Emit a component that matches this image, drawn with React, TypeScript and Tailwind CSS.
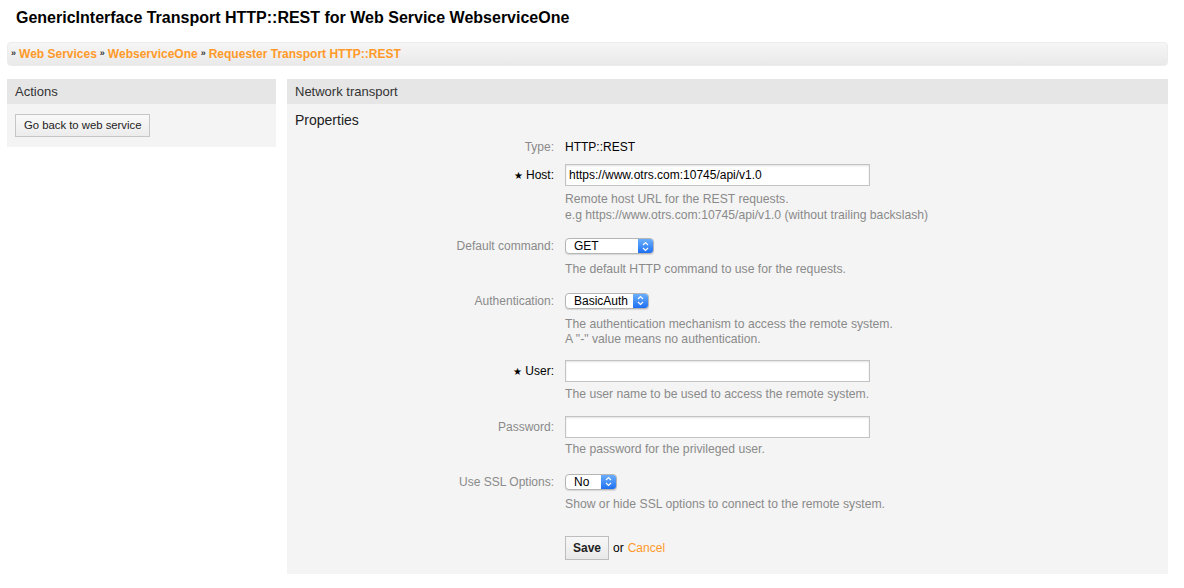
import type { ReactNode } from 'react'

const font = { fontFamily: '"Liberation Sans", Arial, Helvetica, sans-serif' }

function Select({ value, width }: { value: string; width: string }) {
  return (
    <div
      className={`flex h-[16px] items-stretch overflow-hidden rounded-[4px] border border-[#b5b5b5] bg-white shadow-[0_1px_1px_rgba(0,0,0,0.12)] ${width}`}
    >
      <span className="flex-1 pl-[8px] text-[12px] leading-[14px] text-black">{value}</span>
      <span className="flex w-[15px] items-center justify-center bg-gradient-to-b from-[#6aaefc] to-[#1d6ff2]">
        <svg width="7" height="11" viewBox="0 0 7 11" fill="none">
          <path d="M1 4 L3.5 1.5 L6 4" stroke="white" strokeWidth="1.2" />
          <path d="M1 7 L3.5 9.5 L6 7" stroke="white" strokeWidth="1.2" />
        </svg>
      </span>
    </div>
  )
}

function TextInput({ value }: { value?: string }) {
  return (
    <div className="flex h-[22px] w-[305px] items-center border border-[#c3c3c3] bg-white px-[3px] text-[12px] text-black shadow-[inset_0_1px_2px_rgba(0,0,0,0.12)]">
      {value}
    </div>
  )
}

function Field({
  label,
  required,
  children,
  help,
  className = 'mt-3',
  helpClass = 'mt-[5px] leading-[15.5px]',
}: {
  label: string
  required?: boolean
  children: ReactNode
  help?: string[]
  className?: string
  helpClass?: string
}) {
  return (
    <div className={className}>
      <div className="flex h-[22px] items-center">
        <div
          className={`w-[270px] shrink-0 pr-[11px] text-right text-[12px] ${required ? 'text-black' : 'text-[#8a8a8a]'}`}
        >
          {required && <span className="mr-[3px] text-[10px]">★</span>}
          {label}:
        </div>
        {children}
      </div>
      {help && (
        <div className={`pl-[270px] text-[12.2px] text-[#8a8a8a] ${helpClass}`}>
          {help.map((line) => (
            <div key={line}>{line}</div>
          ))}
        </div>
      )}
    </div>
  )
}

export default function App() {
  return (
    <div className="min-h-[588px] bg-white pl-[7px] pr-[16px]" style={font}>
      <h1 className="pl-[9px] pt-[9px] text-[16px] font-bold leading-[18px] text-black">
        GenericInterface Transport HTTP::REST for Web Service WebserviceOne
      </h1>

      <div className="mt-[15px] flex h-[24px] items-center rounded-[4px] border border-[#ececec] bg-gradient-to-b from-[#f6f6f6] to-[#e9e9e9] pl-[3px] text-[12px] font-bold">
        <span className="mr-[3px] text-[9px] text-[#333]">»</span>
        <span className="text-[#ff9a2a]">Web Services</span>
        <span className="mx-[3px] text-[9px] text-[#333]">»</span>
        <span className="text-[#ff9a2a]">WebserviceOne</span>
        <span className="mx-[3px] text-[9px] text-[#333]">»</span>
        <span className="text-[#ff9a2a]">Requester Transport HTTP::REST</span>
      </div>

      <div className="mt-[13px] flex items-start gap-[11px]">
        <div className="w-[269px] shrink-0">
          <div className="flex h-[25px] items-center bg-[#e6e6e6] pl-[8px] text-[13px] text-[#333]">
            Actions
          </div>
          <div className="bg-[#f4f4f4] px-[8px] pb-[10px] pt-[8px]">
            <button
              type="button"
              className="h-[23px] border border-[#c6c6c6] bg-gradient-to-b from-[#f9f9f9] to-[#ececec] px-[8px] text-[11.3px] text-[#222]"
            >
              Go back to web service
            </button>
          </div>
        </div>

        <div className="flex-1">
          <div className="flex h-[25px] items-center bg-[#e6e6e6] pl-[8px] text-[13px] text-[#333]">
            Network transport
          </div>
          <div className="bg-[#f4f4f4] pb-[14px] pl-[8px] pt-[8px]">
            <div className="text-[14px] leading-[16px] text-[#222]">Properties</div>

            <Field label="Type" className="mt-[8px]">
              <span className="text-[12px] text-black">HTTP::REST</span>
            </Field>

            <Field
              label="Host"
              required
              className="mt-[6px]"
              helpClass="mt-[5px] leading-[16px]"
              help={[
                'Remote host URL for the REST requests.',
                'e.g https://www.otrs.com:10745/api/v1.0 (without trailing backslash)',
              ]}
            >
              <TextInput value="https://www.otrs.com:10745/api/v1.0" />
            </Field>

            <Field label="Default command" help={['The default HTTP command to use for the requests.']}>
              <Select value="GET" width="w-[89px]" />
            </Field>

            <Field
              label="Authentication"
              className="mt-[12px]"
              help={[
                'The authentication mechanism to access the remote system.',
                'A "-" value means no authentication.',
              ]}
            >
              <Select value="BasicAuth" width="w-[84px]" />
            </Field>

            <Field label="User" required help={['The user name to be used to access the remote system.']}>
              <TextInput />
            </Field>

            <Field
              label="Password"
              className="mt-[14px]"
              helpClass="mt-[4px] leading-[15.5px]"
              help={['The password for the privileged user.']}
            >
              <TextInput />
            </Field>

            <Field
              label="Use SSL Options"
              className="mt-[13px]"
              helpClass="mt-[4px] leading-[15.5px]"
              help={['Show or hide SSL options to connect to the remote system.']}
            >
              <Select value="No" width="w-[52px]" />
            </Field>

            <div className="mt-[24px] flex items-center pl-[270px] text-[12px]">
              <button
                type="button"
                className="h-[24px] border border-[#bdbdbd] bg-gradient-to-b from-[#f7f7f7] to-[#e9e9e9] px-[7px] font-bold text-[#222]"
              >
                Save
              </button>
              <span className="ml-[4px] text-black">or</span>
              <span className="ml-[4px] text-[#ff9a2a]">Cancel</span>
            </div>
          </div>
        </div>
      </div>
    </div>
  )
}
